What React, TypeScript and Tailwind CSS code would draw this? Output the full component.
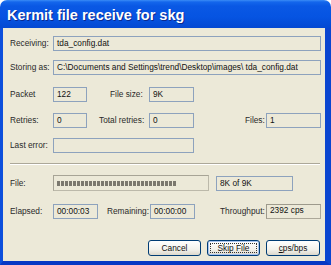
import React from "react";

const font = { fontFamily: '"Liberation Sans", Arial, sans-serif' };

function Box({ w, children, grey }: { w: string; children?: React.ReactNode; grey?: boolean }) {
  return (
    <div
      className={`${w} h-[15px] flex items-center pl-[3px] text-[#111] whitespace-nowrap overflow-hidden ${
        grey ? "border border-[#aca899] border-t-[#9d9a8c] border-l-[#9d9a8c] items-start pt-[1px]" : "border border-[#8da2bd]"
      }`}
    >
      {children}
    </div>
  );
}

function Label({ w, children, ml }: { w: string; children: React.ReactNode; ml?: string }) {
  return <div className={`${w} ${ml ?? ""} text-[#2a2a2a] whitespace-nowrap`}>{children}</div>;
}

export default function App() {
  const blocks = Array.from({ length: 30 });
  return (
    <div className="w-[331px] h-[265px] flex flex-col text-[8.3px] leading-none" style={font}>
      {/* Title bar */}
      <div className="h-[28px] rounded-t-[7px] bg-[linear-gradient(to_bottom,#3a8cf6_0px,#1466ec_2px,#0a58e4_6px,#0654e2_60%,#0449d2_100%)] flex items-center pl-[7px] pt-[2px]">
        <span
          className="text-white font-bold text-[14.5px] [text-shadow:1px_1px_0_#0b2a8f]"
          style={font}
        >
          Kermit file receive for skg
        </span>
      </div>
      {/* Body */}
      <div className="flex-1 flex border-l-[3px] border-r-[6px] border-b-[4px] border-l-[#0c4fdc] border-r-[#0a45d0] border-b-[#0637c4]">
        <div className="flex-1 bg-[#ece9d8] flex flex-col pl-[7px] pr-[4px]">
          {/* Receiving */}
          <div className="flex items-center mt-[8px]">
            <Label w="w-[43px]">Receiving:</Label>
            <Box w="w-[268px]">tda_config.dat</Box>
          </div>
          {/* Storing as */}
          <div className="flex items-center mt-[9px]">
            <Label w="w-[43px]">Storing as:</Label>
            <Box w="w-[268px]">C:\Documents and Settings\trend\Desktop\images\ tda_config.dat</Box>
          </div>
          {/* Packet */}
          <div className="flex items-center mt-[12px]">
            <Label w="w-[43px]">Packet</Label>
            <Box w="w-[34px]">122</Box>
            <Label w="w-[39px]" ml="ml-[23px]">File size:</Label>
            <Box w="w-[45px]">9K</Box>
          </div>
          {/* Retries */}
          <div className="flex items-center mt-[11px]">
            <Label w="w-[43px]">Retries:</Label>
            <Box w="w-[34px]">0</Box>
            <Label w="w-[50px]" ml="ml-[12px]">Total retries:</Label>
            <Box w="w-[45px]">0</Box>
            <Label w="w-[21px]" ml="ml-[51px]">Files:</Label>
            <Box w="w-[55px]">1</Box>
          </div>
          {/* Last error */}
          <div className="flex items-center mt-[10px]">
            <Label w="w-[43px]">Last error:</Label>
            <Box w="w-[141px]" />
          </div>
          {/* Separator */}
          <div className="mt-[10px] mr-[1px] h-[2px] border-t border-t-[#aca899] border-b border-b-white" />
          {/* File */}
          <div className="flex items-center mt-[10px]">
            <Label w="w-[43px]">File:</Label>
            <div className="w-[156px] h-[16px] border border-[#bcb9aa] border-t-[#a7a496] border-l-[#a7a496] flex items-center pl-[3px] gap-[1px]">
              {blocks.map((_, i) => (
                <div key={i} className="w-[3px] h-[5px] bg-[#7b786e]" />
              ))}
            </div>
            <div className="ml-[7px]">
              <Box w="w-[77px]">8K of 9K</Box>
            </div>
          </div>
          {/* Elapsed */}
          <div className="flex items-center mt-[13px]">
            <Label w="w-[43px]">Elapsed:</Label>
            <Box w="w-[45px]">00:00:03</Box>
            <Label w="w-[43px]" ml="ml-[9px]">Remaining:</Label>
            <Box w="w-[45px]">00:00:00</Box>
            <Label w="w-[46px]" ml="ml-[25px]">Throughput:</Label>
            <Box w="w-[55px]" grey>
              2392 cps
            </Box>
          </div>
          {/* Buttons */}
          <div className="flex mt-[21px] pl-[138px] gap-[6px]">
            <button
              className="w-[53px] h-[16px] rounded-[3px] border border-[#003c74] bg-[linear-gradient(to_bottom,#ffffff,#f3f2ec_60%,#dcd8cc)] text-[#111] text-[8.3px] leading-none"
              style={font}
            >
              Cancel
            </button>
            <button
              className="w-[53px] h-[16px] rounded-[3px] border border-[#003c74] bg-[linear-gradient(to_bottom,#ffffff,#f3f2ec_60%,#dcd8cc)] text-[#111] text-[8.3px] leading-none shadow-[inset_0_0_0_1px_#a8c4f0] p-[2px]"
              style={font}
            >
              <div className="w-full h-full border border-dotted border-[#333] flex items-center justify-center">Skip File</div>
            </button>
            <button
              className="w-[54px] h-[16px] rounded-[3px] border border-[#003c74] bg-[linear-gradient(to_bottom,#ffffff,#f3f2ec_60%,#dcd8cc)] text-[#111] text-[8.3px] leading-none"
              style={font}
            >
              <span className="underline">c</span>ps/bps
            </button>
          </div>
        </div>
      </div>
    </div>
  );
}
